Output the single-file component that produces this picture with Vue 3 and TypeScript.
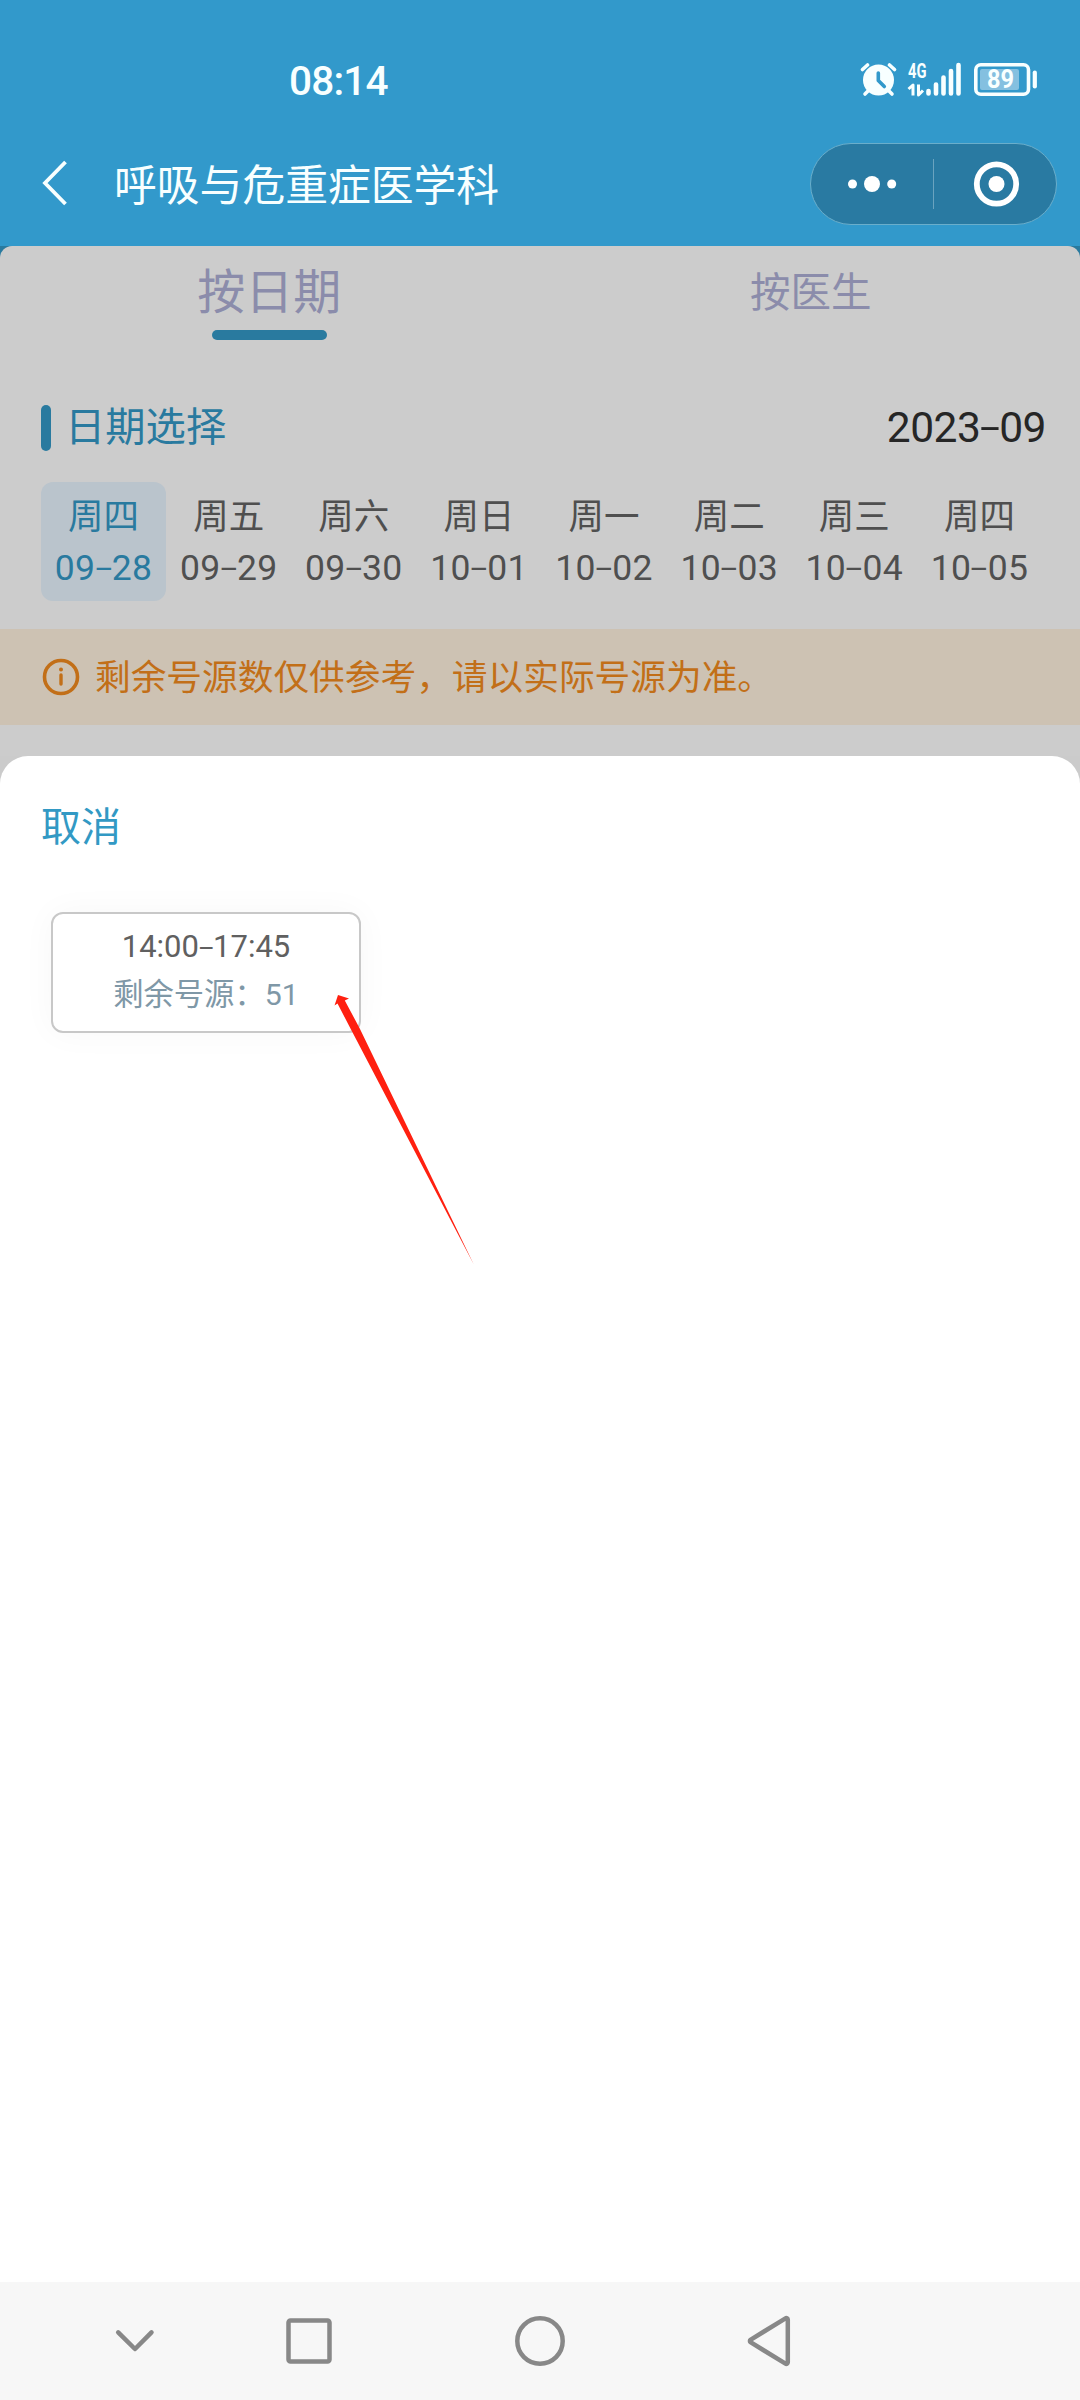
<script setup lang="ts">
import { ref } from 'vue'

interface Day {
  week: string
  month: string
  date: string
}

const days: Day[] = [
  { week: '周四', month: '09', date: '28' },
  { week: '周五', month: '09', date: '29' },
  { week: '周六', month: '09', date: '30' },
  { week: '周日', month: '10', date: '01' },
  { week: '周一', month: '10', date: '02' },
  { week: '周二', month: '10', date: '03' },
  { week: '周三', month: '10', date: '04' },
  { week: '周四', month: '10', date: '05' },
]
const selected = ref(0)
</script>

<template>
  <div class="phone">
    <header class="header">
      <div class="status">
        <span class="clock">08:14</span>
        <svg class="status-icons" width="180" height="40" viewBox="860 60 180 40">
          <g stroke="#f8ffff" stroke-linecap="round" fill="none">
            <circle cx="878.5" cy="80" r="15.5" fill="#f8ffff" stroke="none" />
            <path d="M862.5 69.5l5-4.5M894.500 69.500l-5-4.500" stroke-width="3.600" />
            <path d="M869 90l-4 4M888 90l4 4" stroke-width="3.600" />
            <path d="M878.300 73v7.500l6 6" stroke="#3299cb" stroke-width="3.600" stroke-linejoin="round" />
            <path d="M928.500 91v2.500M936 84.500v9M943.500 77.500v16M951 71v22.500M958.500 65v28.500" stroke-width="4.600" />
            <path d="M908.500 89l4.500-4v10.500" stroke-width="3" stroke-linejoin="round" stroke-linecap="butt" />
            <path d="M918.500 84.500v10.500l4.500-4.500" stroke-width="3" stroke-linejoin="round" stroke-linecap="butt" />
            <rect x="975.800" y="64.800" width="52.700" height="29.500" rx="5" stroke-width="3.600" />
            <path d="M1034.800 72.500v14" stroke-width="4.200" />
          </g>
          <rect x="980" y="69" width="39" height="21" rx="2" fill="#84c0e0" />
          <text class="net" x="908" y="77.800" textLength="18.500" lengthAdjust="spacingAndGlyphs">4G</text>
          <text class="battery" x="987" y="88.300" textLength="27" lengthAdjust="spacingAndGlyphs">89</text>
        </svg>
      </div>
      <div class="titlebar">
        <svg class="back" width="30" height="50" viewBox="0 0 30 50">
          <path d="M25.500 3L5 24l20.500 21" fill="none" stroke="#f8ffff" stroke-width="3.800" />
        </svg>
        <h1 class="title">呼吸与危重症医学科</h1>
        <div class="capsule">
          <svg class="cap-half" width="122" height="50" viewBox="0 0 122 50" fill="#fff">
            <circle cx="41.500" cy="25" r="4.500" />
            <circle cx="61" cy="25" r="8" />
            <circle cx="80.700" cy="25" r="4.500" />
          </svg>
          <i class="cap-line"></i>
          <svg class="cap-half" width="122" height="50" viewBox="0 0 122 50">
            <circle cx="62.500" cy="25" r="19.700" fill="none" stroke="#fff" stroke-width="5.800" />
            <circle cx="62.500" cy="25" r="8" fill="#fff" />
          </svg>
        </div>
      </div>
    </header>

    <main class="page">
      <section class="panel">
        <div class="tabs">
          <div class="tab tab-on">按日期</div>
          <div class="tab">按医生</div>
        </div>
        <div class="section-head">
          <i class="mark"></i>
          <span class="section-title">日期选择</span>
          <span class="month">2023<span class="dash">-</span>09</span>
        </div>
        <div class="days">
          <div
            v-for="(d, i) in days"
            :key="i"
            class="day"
            :class="{ 'day-on': i === selected }"
            @click="selected = i"
          >
            <span class="week">{{ d.week }}</span>
            <span class="date">{{ d.month }}<span class="dash">-</span>{{ d.date }}</span>
          </div>
        </div>
        <div class="notice">
          <svg width="38" height="38" viewBox="0 0 38 38" fill="none" stroke="#c26f18">
            <circle cx="19" cy="19" r="16.500" stroke-width="3.600" />
            <path d="M19 17v9" stroke-width="3.400" stroke-linecap="round" />
            <circle cx="19" cy="11.500" r="2" fill="#c26f18" stroke="none" />
          </svg>
          <span class="notice-text">剩余号源数仅供参考，请以实际号源为准。</span>
        </div>
      </section>

      <section class="sheet">
        <div class="cancel">取消</div>
        <div class="slot">
          <div class="slot-time">14:00<span class="dash">-</span>17:45</div>
          <div class="slot-left">剩余号源：51</div>
          <svg class="arrow" width="142" height="274" viewBox="334 993 142 274">
            <path
              d="M338 995L349 998.500 344.800 1000.500 359.500 1028 473.800 1264.500 351 1029.500 337.500 1003.500 334.500 1005.500Z"
              fill="#ff2010"
            />
          </svg>
        </div>
      </section>
    </main>

    <nav class="navbar">
      <svg width="1080" height="118" viewBox="0 2282 1080 118" fill="none" stroke="#888" stroke-width="4.500">
        <path d="M118.200 2332.300L135 2349l16.500-16.700" stroke-linecap="round" stroke-linejoin="round" />
        <rect x="288.500" y="2320.500" width="41" height="41" rx="2" />
        <circle cx="540" cy="2341" r="22.700" />
        <path d="M785.500 2318.300a1.500 1.500 0 0 1 2.300 1.200v43a1.500 1.500 0 0 1-2.300 1.200l-35-21.500a1.500 1.500 0 0 1 0-2.400z" />
      </svg>
    </nav>
  </div>
</template>

<style>
body {
  margin: 0;
}
</style>

<style scoped>
.phone {
  width: 1080px;
  height: 2400px;
  display: flex;
  flex-direction: column;
  overflow: hidden;
  background: #fff;
  font-family: Roboto, "Noto Sans CJK SC", sans-serif;
}
.header {
  height: 246px;
  flex: none;
  background: #3299cb;
  color: #f8ffff;
}
.status {
  height: 123px;
  box-sizing: border-box;
  padding: 60px 40px 0 289px;
  display: flex;
  justify-content: space-between;
  align-items: flex-start;
}
.clock {
  font-size: 40.500px;
  line-height: 42px;
  font-weight: 500;
  letter-spacing: -0.8px;
}
.status-icons {
  flex: none;
}
.net {
  font: 700 20px Roboto, sans-serif;
  fill: #f8ffff;
}
.battery {
  font: 700 25px Roboto, sans-serif;
  fill: #f8ffff;
}
.titlebar {
  height: 123px;
  box-sizing: border-box;
  padding: 0 23px 1px 40px;
  display: flex;
  align-items: center;
}
.back {
  flex: none;
}
.title {
  flex: 1;
  margin: 4px 0 0 44px;
  font-size: 42.800px;
  line-height: 60px;
  font-weight: 400;
}
.capsule {
  width: 247px;
  height: 82px;
  box-sizing: border-box;
  border: 1px solid #6aaecb;
  border-radius: 41px;
  background: #297aa2;
  display: flex;
  align-items: center;
}
.cap-half {
  flex: none;
}
.cap-line {
  width: 1px;
  height: 50px;
  background: #6aa3bf;
}
.page {
  flex: 1;
  display: flex;
  flex-direction: column;
  background: linear-gradient(#297a9f 0 100px, #cbcbcb 100px);
}
.panel {
  height: 510px;
  flex: none;
  border-radius: 12px 12px 0 0;
  background: #ccc;
}
.tabs {
  height: 94px;
  display: flex;
}
.tab {
  flex: 1;
  box-sizing: border-box;
  display: flex;
  flex-direction: column;
  align-items: center;
  padding-left: 3px;
  font-size: 40.500px;
  line-height: 94px;
  color: #8b8cab;
}
.tab-on {
  height: 94px;
  padding: 10px 0 0;
  font-size: 48px;
  line-height: 74px;
}
.tab-on::after {
  content: "";
  width: 115px;
  height: 10px;
  flex: none;
  border-radius: 5px;
  background: #297a9f;
}
.section-head {
  height: 46px;
  margin: 65px 34px 0 41px;
  display: flex;
  align-items: center;
}
.mark {
  width: 10px;
  height: 46px;
  border-radius: 5px;
  background: #297a9f;
}
.section-title {
  margin-left: 14px;
  flex: 1;
  font-size: 40.300px;
  line-height: 46px;
  color: #297a9f;
}
.month {
  font-size: 42.500px;
  line-height: 46px;
  letter-spacing: -0.5px;
  color: #262626;
}
.dash {
  display: inline-block;
  margin: 0 0.09em;
  transform: translateY(-0.01em) scale(1.7, 0.9);
}
.days {
  display: flex;
  margin: 31px 0 0 41px;
  width: 1001px;
}
.day {
  flex: 1;
  height: 119px;
  box-sizing: border-box;
  padding-top: 10px;
  border-radius: 12px;
  display: flex;
  flex-direction: column;
  align-items: center;
  color: #4f4f4f;
  font-size: 35.500px;
}
.day-on {
  background: #bac4cc;
  color: #297a9f;
}
.week {
  line-height: 50px;
}
.date {
  line-height: 52px;
  letter-spacing: 0.3px;
}
.notice {
  height: 96px;
  margin-top: 28px;
  box-sizing: border-box;
  padding-left: 42px;
  display: flex;
  align-items: center;
  gap: 15px;
  background: #cdc2b3;
  color: #c26f18;
  font-size: 35.700px;
  line-height: 50px;
}
.notice-text {
  padding-top: 1px;
}
.sheet {
  flex: 1;
  box-sizing: border-box;
  padding: 42px 41px 0;
  border-radius: 28px 28px 0 0;
  background: #fff;
}
.cancel {
  font-size: 40px;
  line-height: 60px;
  color: #3299c4;
}
.slot {
  position: relative;
  width: 310px;
  height: 121px;
  box-sizing: border-box;
  margin: 54px 0 0 10px;
  padding-top: 10px;
  border: 2px solid #c8c8c8;
  border-radius: 12px;
  background: #fff;
  box-shadow: 0 0 34px rgba(0, 0, 0, 0.035);
  text-align: center;
}
.slot-time {
  font-size: 31px;
  line-height: 46px;
  color: #606060;
}
.slot-left {
  font-size: 30.300px;
  line-height: 50px;
  color: #7f98a7;
}
.arrow {
  position: absolute;
  left: 281px;
  top: 79px;
  overflow: visible;
}
.navbar {
  height: 118px;
  flex: none;
  background: #f7f7f7;
}
.navbar svg {
  display: block;
}
</style>
